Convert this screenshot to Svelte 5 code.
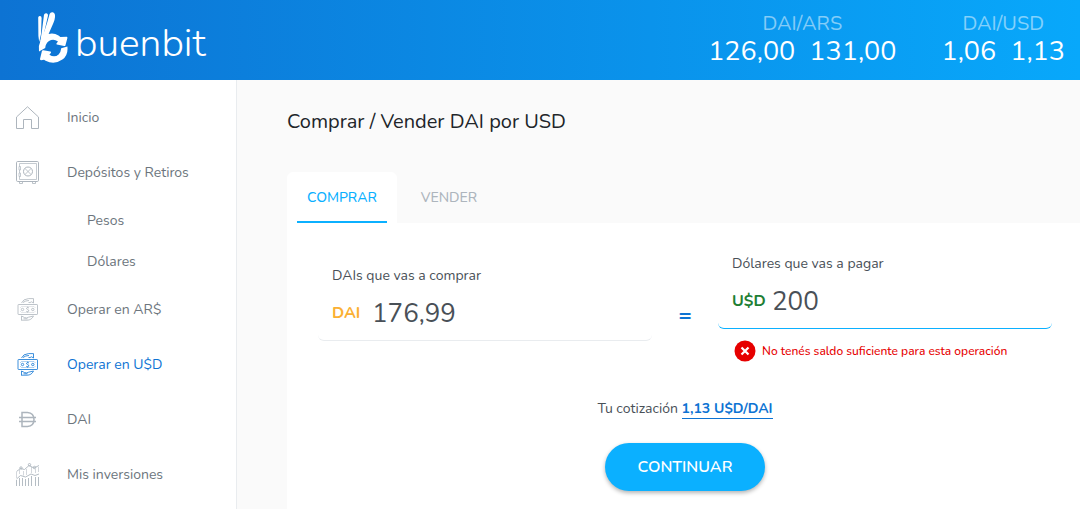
<script>
  let tab = 'comprar';
  let dai = '176,99';
  let usd = '200';

  const rates = [
    { pair: 'DAI/ARS', buy: '126,00', sell: '131,00' },
    { pair: 'DAI/USD', buy: '1,06', sell: '1,13' }
  ];

  const menu = [
    { label: 'Inicio', icon: 'home' },
    { label: 'Depósitos y Retiros', icon: 'safe' },
    { label: 'Pesos', sub: true },
    { label: 'Dólares', sub: true },
    { label: 'Operar en AR$', icon: 'money' },
    { label: 'Operar en U$D', icon: 'money', active: true },
    { label: 'DAI', icon: 'dai' },
    { label: 'Mis inversiones', icon: 'chart' }
  ];
</script>

<header>
  <a class="logo" href="#inicio">
    <svg width="32" height="52" viewBox="0 0 32 52" fill="#fff" aria-hidden="true">
      <path d="M1.2 5.5Q1.4 3.8 3 4Q4.6 4.2 4.6 6L4 22L2.2 30L1.4 24Z" />
      <path d="M7 2.8Q7.6 1 9.4 1.3Q11.2 1.7 11 3.6L6.4 24L3 31L4.8 20Z" />
      <path d="M12.6 2Q13.4 0 15.6 .3Q18.4.8 18 5Q17.8 8 16.4 11L11.6 22Q17 20.6 21.5 23.6L23.4 25L29.8 24.8Q30.6 25 30.4 26L28.4 33.4Q28 34.2 27.2 34L19.8 32.4Q19 32 19.6 31.2L21 29.4Q16.4 26.4 12 29Q8.6 31.4 8.2 36L2 39.4Q1.2 33.6 3.6 28.6Q8.4 18 12.6 2Z" />
      <path d="M30.4 34.6Q31.4 43 25.4 47.6Q17.4 53.2 8.6 48.8L7 47.8L4 48.2Q2.8 48 3 47L5 38.8Q5.4 38 6.4 38.2L13.4 39.6Q14.4 40 13.8 41L12.4 42.8Q17.6 46 21.6 42.4Q23.8 40.4 24.2 36.2Z" />
    </svg>
    <span>buenbit</span>
  </a>

  <div class="rates">
    {#each rates as rate}
      <div class="rate">
        <span class="pair">{rate.pair}</span>
        <span class="prices">
          <span>{rate.buy}</span>
          <span>{rate.sell}</span>
        </span>
      </div>
    {/each}
  </div>
</header>

<div class="layout">
  <nav>
    {#each menu as item}
      <a href="#menu" class:sub={item.sub} class:active={item.active}>
        {#if !item.sub}
          <svg width="24" height="24" viewBox="0 0 24 24" fill="none" stroke="currentColor" aria-hidden="true">
            {#if item.icon === 'home'}
              <path d="M.5 11L11.5 .8L22.5 11V22.5H15.5V13.5H7.5V22.5H.5Z" />
            {:else if item.icon === 'safe'}
              <rect x=".5" y=".5" width="22" height="20" rx="1.2" />
              <path d="M3.5 5.5V2.5H20.5V18.5H3.5V15.5" opacity=".7" />
              <path d="M3 5.5h1.5v3.5H3zM3 12h1.5v3.5H3zM3.5 9v3" opacity=".7" />
              <circle cx="12" cy="10.5" r="4.5" />
              <path d="M9 7.5l6 6M15 7.5l-6 6" stroke-width=".8" />
              <path d="M3.5 21v1.500h3v-1.500M16.500 21v1.500h3v-1.500" opacity=".8" />
            {:else if item.icon === 'money'}
              <g stroke-width=".8">
                <rect x="2" y="6.5" width="19.500" height="10" rx=".6" />
                <path d="M4 10L5.5 8.5h12.500L19.500 10M4 13L5.500 14.500h12.500L19.500 13" opacity=".4" />
                <circle cx="6.5" cy="11.5" r="1.2" />
                <circle cx="16.8" cy="11.5" r="1.2" />
                <path d="M13 10Q11.5 9 10.6 10.1Q10.3 11.1 11.6 11.5Q13.2 12 12.8 13.1Q11.6 14.2 10.2 13.3M11.6 8.7v1M11.6 13.500v1" />
                <path d="M5.500 5Q7 1 12.500 .6H17.500V5L15.500 3.800Q14 5 12.500 4.500M7 4.500Q9.500 2.500 13 2.500" />
                <path d="M5.500 22.500V18L8.500 19.500Q10.500 20.600 12.500 19.200L17.500 18Q15.500 22.200 11 22.200H5.500M7.500 20.800H11.500" />
              </g>
            {:else if item.icon === 'dai'}
              <path d="M6 4.500H11.500Q18 5 18 11.500Q18 18 11.500 18.500H6Z" stroke-width="1.500" />
              <path d="M3 9.500H20M3 13.500H20" stroke-width="1.400" />
            {:else}
              <g stroke-width=".9">
                <path d="M.5 8.500L4.500 5.500L8.500 6.500L13 2.500L18 5L23 2.500" />
                <path d="M.5 16L4.500 12.500L9.500 14L15 11L19 12.500L23 11" />
                <path d="M.5 17V23M3.500 15V23M6.500 15V23M9.500 16V23M12.500 15V23M15.500 13V23M19.500 14V23M22.500 14V23" />
                <path d="M.5 9V15M3.500 7V11M7.500 8V12.500M10.500 6V12M15.500 4V10M19.500 6V10M22.500 4V9" opacity=".6" />
                <circle cx="5" cy="5" r="1.2" />
                <circle cx="13.5" cy="1.700" r="1.2" />
                <circle cx="18.5" cy="4.500" r="1.2" />
              </g>
            {/if}
          </svg>
        {/if}
        <span>{item.label}</span>
      </a>
    {/each}
  </nav>

  <main>
    <h1>Comprar / Vender DAI por USD</h1>

    <div class="tabs" role="tablist">
      <button role="tab" aria-selected={tab === 'comprar'} class:selected={tab === 'comprar'} on:click={() => (tab = 'comprar')}>
        <span>COMPRAR</span>
      </button>
      <button role="tab" aria-selected={tab === 'vender'} class:selected={tab === 'vender'} on:click={() => (tab = 'vender')}>
        <span>VENDER</span>
      </button>
    </div>

    <section class="card">
      <div class="exchange">
        <div class="field buy">
          <div class="box">
            <label for="dai">DAIs que vas a comprar</label>
            <div class="amount">
              <span class="currency">DAI</span>
              <input id="dai" type="text" bind:value={dai} />
            </div>
          </div>
        </div>

        <span class="equals">=</span>

        <div class="field pay">
          <div class="box">
            <label for="usd">Dólares que vas a pagar</label>
            <div class="amount">
              <span class="currency">U$D</span>
              <input id="usd" type="text" bind:value={usd} />
            </div>
          </div>
          <p class="error">
            <svg width="22" height="22" viewBox="0 0 22 22" aria-hidden="true">
              <circle cx="11" cy="11" r="10.5" fill="#e60000" />
              <path d="M7.5 7.5l7 7M14.5 7.5l-7 7" stroke="#fff" stroke-width="2.2" />
            </svg>
            No tenés saldo suficiente para esta operación
          </p>
        </div>
      </div>

      <p class="quote">Tu cotización <strong>1,13 U$D/DAI</strong></p>
      <button class="continue">CONTINUAR</button>
    </section>
  </main>
</div>

<style>
  :global(body) {
    margin: 0;
    background: #fafafa;
    font-family: Nunito, Lato, sans-serif;
    font-size: 14px;
    color: #495057;
  }

  :global(#app) {
    display: flex;
    flex-direction: column;
    min-height: 100vh;
  }

  header {
    display: flex;
    justify-content: space-between;
    height: 80px;
    flex-shrink: 0;
    padding: 0 15px 0 37px;
    box-sizing: border-box;
    background: linear-gradient(to right, #0d73d3, #08a8fb);
    color: #fff;
  }

  .logo {
    display: flex;
    align-items: flex-start;
    gap: 6px;
    padding-top: 12px;
    color: #fff;
    text-decoration: none;
    font-size: 39px;
    font-weight: 300;
    line-height: 64px;
  }

  .rates {
    display: flex;
    gap: 45px;
  }

  .rate {
    display: flex;
    flex-direction: column;
    align-items: center;
    padding-top: 11px;
  }

  .pair {
    font-size: 20px;
    line-height: 26px;
    color: rgba(255, 255, 255, 0.5);
  }

  .prices {
    display: flex;
    gap: 14px;
    font-size: 27px;
    line-height: 30px;
  }

  .layout {
    display: flex;
    flex: 1;
  }

  nav {
    width: 236px;
    flex-shrink: 0;
    padding-top: 10px;
    background: #fff;
    border-right: 1px solid #e9ecef;
  }

  nav a {
    display: flex;
    align-items: center;
    gap: 27px;
    height: 55px;
    padding-left: 16px;
    color: #6c757d;
    text-decoration: none;
  }

  nav a.sub {
    height: 41px;
    padding-left: 87px;
  }

  nav svg {
    color: #adb5bd;
  }

  nav a.active,
  nav a.active svg {
    color: #0d73d3;
  }

  main {
    flex: 1;
    min-width: 0;
    display: flex;
    flex-direction: column;
    padding-left: 50px;
  }

  h1 {
    margin: 28px 0 36px;
    font-size: 20px;
    font-weight: 400;
    line-height: 28px;
    color: #212529;
  }

  .tabs {
    display: flex;
  }

  .tabs button {
    height: 51px;
    padding: 0 10px;
    border: 0;
    border-radius: 6px 6px 0 0;
    background: none;
    color: #adb5bd;
    font: inherit;
    font-weight: 500;
    cursor: pointer;
  }

  .tabs span {
    display: block;
    padding: 2px 10px 0;
    line-height: 47px;
    border-bottom: 2px solid transparent;
  }

  .tabs .selected {
    background: #fff;
    color: #0bb0ff;
    margin-right: 4px;
  }

  .tabs .selected span {
    border-color: #0bb0ff;
  }

  .card {
    flex: 1;
    display: flex;
    flex-direction: column;
    align-items: center;
    padding: 28px 28px 18px 31px;
    background: #fff;
  }

  .exchange {
    display: flex;
    align-self: stretch;
  }

  .field {
    flex: 1;
    min-width: 0;
  }

  .buy {
    padding-top: 12px;
  }

  .box {
    padding: 0 14px 7px;
    border-bottom: 1px solid #e9ecef;
    border-radius: 6px;
  }

  .pay .box {
    border-color: #0bb0ff;
  }

  label {
    display: block;
    line-height: 26px;
  }

  .amount {
    display: flex;
    align-items: center;
    padding-top: 4px;
  }

  .currency {
    width: 40px;
    font-size: 16px;
    font-weight: 700;
    color: #fbb034;
  }

  .pay .currency {
    color: #1e7e34;
  }

  input {
    flex: 1;
    min-width: 0;
    height: 40px;
    padding: 0;
    border: 0;
    outline: 0;
    background: none;
    color: #495057;
    font: inherit;
    font-size: 26px;
  }

  .equals {
    width: 66px;
    padding-top: 51px;
    text-align: center;
    font-size: 22px;
    font-weight: 700;
    line-height: 26px;
    color: #0d73d3;
  }

  .error {
    display: flex;
    align-items: center;
    gap: 6px;
    margin: 11px 0 0 16px;
    font-size: 12px;
    font-weight: 500;
    color: #e60000;
  }

  .quote {
    margin: 37px 0 24px;
    line-height: 20px;
  }

  .quote strong {
    display: inline-block;
    line-height: 18px;
    border-bottom: 1px solid #0d73d3;
    color: #0d73d3;
  }

  .continue {
    width: 160px;
    height: 48px;
    border: 0;
    border-radius: 24px;
    background: #0bb0ff;
    box-shadow: 0 2px 4px rgba(0, 0, 0, 0.3);
    color: #fff;
    font: inherit;
    font-size: 16px;
    font-weight: 600;
    cursor: pointer;
  }
</style>
